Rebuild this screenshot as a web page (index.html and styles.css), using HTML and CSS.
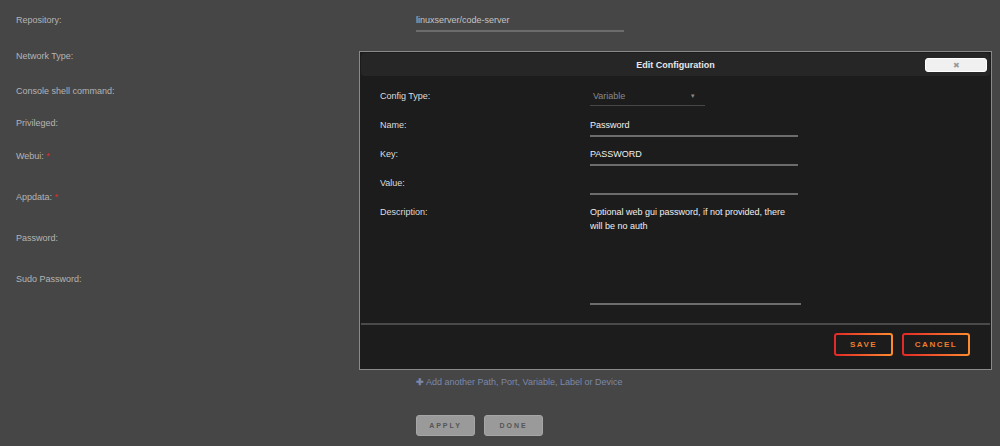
FILE: index.html
```html
<!DOCTYPE html>
<html lang="en">
<head>
  <meta charset="UTF-8" />
  <meta name="viewport" content="width=device-width, initial-scale=1.0"/>
  <title>Update Container</title>
  <link rel="stylesheet" href="styles.css">
</head>
<body>
  <div class="page">
    <div class="row r36">
      <span class="label">Repository:</span>
      <input class="field" type="text" value="linuxserver/code-server">
    </div>
    <div class="row r35"><span class="label">Network Type:</span></div>
    <div class="row r32"><span class="label">Console shell command:</span></div>
    <div class="row r33"><span class="label">Privileged:</span></div>
    <div class="row r41"><span class="label">Webui: <i class="req">*</i></span></div>
    <div class="row r41"><span class="label">Appdata: <i class="req">*</i></span></div>
    <div class="row r41"><span class="label">Password:</span></div>
    <div class="row r103"><span class="label">Sudo Password:</span></div>

    <div class="row add-row">
      <span></span>
      <a class="add-link" href="#"><b>&#10010;</b> Add another Path, Port, Variable, Label or Device</a>
    </div>

    <div class="row">
      <span></span>
      <div class="actions">
        <button class="btn-grey">Apply</button>
        <button class="btn-grey">Done</button>
      </div>
    </div>
  </div>

  <div class="modal">
    <div class="modal-title">
      <span>Edit Configuration</span>
      <button class="close">&#10006;</button>
    </div>
    <div class="modal-body">
      <div class="mrow">
        <span class="mlabel">Config Type:</span>
        <div class="select">Variable <span class="caret">&#9662;</span></div>
      </div>
      <div class="mrow">
        <span class="mlabel">Name:</span>
        <input class="minput" type="text" value="Password">
      </div>
      <div class="mrow">
        <span class="mlabel">Key:</span>
        <input class="minput" type="text" value="PASSWORD">
      </div>
      <div class="mrow">
        <span class="mlabel">Value:</span>
        <input class="minput" type="text" value="">
      </div>
      <div class="mrow mrow-area">
        <span class="mlabel">Description:</span>
        <textarea class="marea">Optional web gui password, if not provided, there will be no auth</textarea>
      </div>
    </div>
    <div class="modal-foot">
      <button class="btn-line save">Save</button>
      <button class="btn-line cancel">Cancel</button>
    </div>
  </div>
</body>
</html>
```

FILE: styles.css
```css
body {
  margin: 0;
  background-color: #464646;
  font-family: "Liberation Sans", Arial, sans-serif;
  font-size: 9px;
  color: #b4b4b4;
  height: 446px;
  overflow: hidden;
}

.page {
  padding: 10px 0 0 16px;
}

.row {
  display: grid;
  grid-template-columns: 400px 1fr;
  align-items: start;
}

.r36 { height: 36px; }
.r35 { height: 35px; }
.r32 { height: 32px; }
.r33 { height: 33px; }
.r41 { height: 41px; }
.r103 { height: 103px; }

.label {
  line-height: 20px;
}

.req {
  font-style: normal;
  color: #e22828;
}

.field {
  width: 208px;
  height: 20px;
  box-sizing: content-box;
  padding: 0;
  border: none;
  border-bottom: 2px solid #6c6c6c;
  background: transparent;
  color: #c4c4c4;
  font-family: inherit;
  font-size: 9px;
  outline: none;
}

.add-row {
  height: 20px;
  margin-bottom: 23px;
}

.add-link {
  line-height: 20px;
  color: #7d88a8;
  text-decoration: none;
}

.add-link b {
  font-size: 9px;
}

.actions {
  display: flex;
  gap: 9px;
}

.btn-grey {
  width: 59px;
  height: 21px;
  padding: 0;
  background-color: #9a9a9a;
  border: 1px solid #a6a6a6;
  border-radius: 3px;
  color: #555;
  font-family: inherit;
  font-size: 7px;
  font-weight: bold;
  letter-spacing: 2px;
  text-transform: uppercase;
}

/* edit dialog sits over the form */
.modal {
  position: absolute;
  left: 359px;
  top: 51px;
  width: 629px;
  height: 315px;
  background-color: #1c1c1c;
  border: 1px solid #8a8a8a;
  padding: 1px;
  color: #dcdcdc;
}

.modal-title {
  position: relative;
  height: 23px;
  background-color: #262626;
  border-radius: 4px;
  display: flex;
  align-items: center;
  justify-content: center;
  font-weight: bold;
  font-size: 9px;
  color: #e8e8e8;
}

.close {
  position: absolute;
  right: 3px;
  top: 5px;
  width: 62px;
  height: 14px;
  padding: 0;
  background-color: #f0f0f0;
  border: 1px solid #fff;
  border-radius: 3px;
  color: #9a9a9a;
  font-size: 8px;
}

.modal-body {
  padding: 10px 0 0 19px;
}

.mrow {
  display: grid;
  grid-template-columns: 210px 1fr;
  align-items: start;
  height: 29px;
}

.mrow-area {
  height: auto;
}

.mlabel {
  line-height: 20px;
}

.select {
  width: 115px;
  height: 20px;
  line-height: 20px;
  padding-left: 3px;
  box-sizing: border-box;
  border-bottom: 1px solid #474747;
  color: #8a8a8a;
  display: flex;
  justify-content: space-between;
}

.caret {
  font-size: 7px;
  padding-right: 10px;
}

.minput {
  width: 208px;
  height: 20px;
  box-sizing: content-box;
  padding: 0;
  border: none;
  border-bottom: 2px solid #6c6c6c;
  background: transparent;
  color: #f0f0f0;
  font-family: inherit;
  font-size: 9px;
  outline: none;
}

.marea {
  display: block;
  width: 203px;
  height: 98px;
  box-sizing: content-box;
  padding: 3px 8px 0 0;
  margin: 0;
  border: none;
  border-bottom: 2px solid #6c6c6c;
  background: transparent;
  color: #f0f0f0;
  font-family: inherit;
  font-size: 9px;
  line-height: 14px;
  resize: none;
  outline: none;
  overflow: hidden;
}

.modal-foot {
  margin-top: 18px;
  border-top: 2px solid #4a4a4a;
  padding: 8px 20px 0 0;
  display: flex;
  justify-content: flex-end;
  gap: 9px;
}

.btn-line {
  height: 23px;
  padding: 0;
  border: 2px solid transparent;
  border-radius: 3px;
  background: linear-gradient(#1c1c1c, #1c1c1c) padding-box,
              linear-gradient(90deg, #e22828, #ff8c2f) border-box;
  color: #ef7d2b;
  font-family: inherit;
  font-size: 8px;
  font-weight: bold;
  letter-spacing: 1.5px;
  text-transform: uppercase;
}

.save { width: 59px; }
.cancel { width: 68px; }
```
